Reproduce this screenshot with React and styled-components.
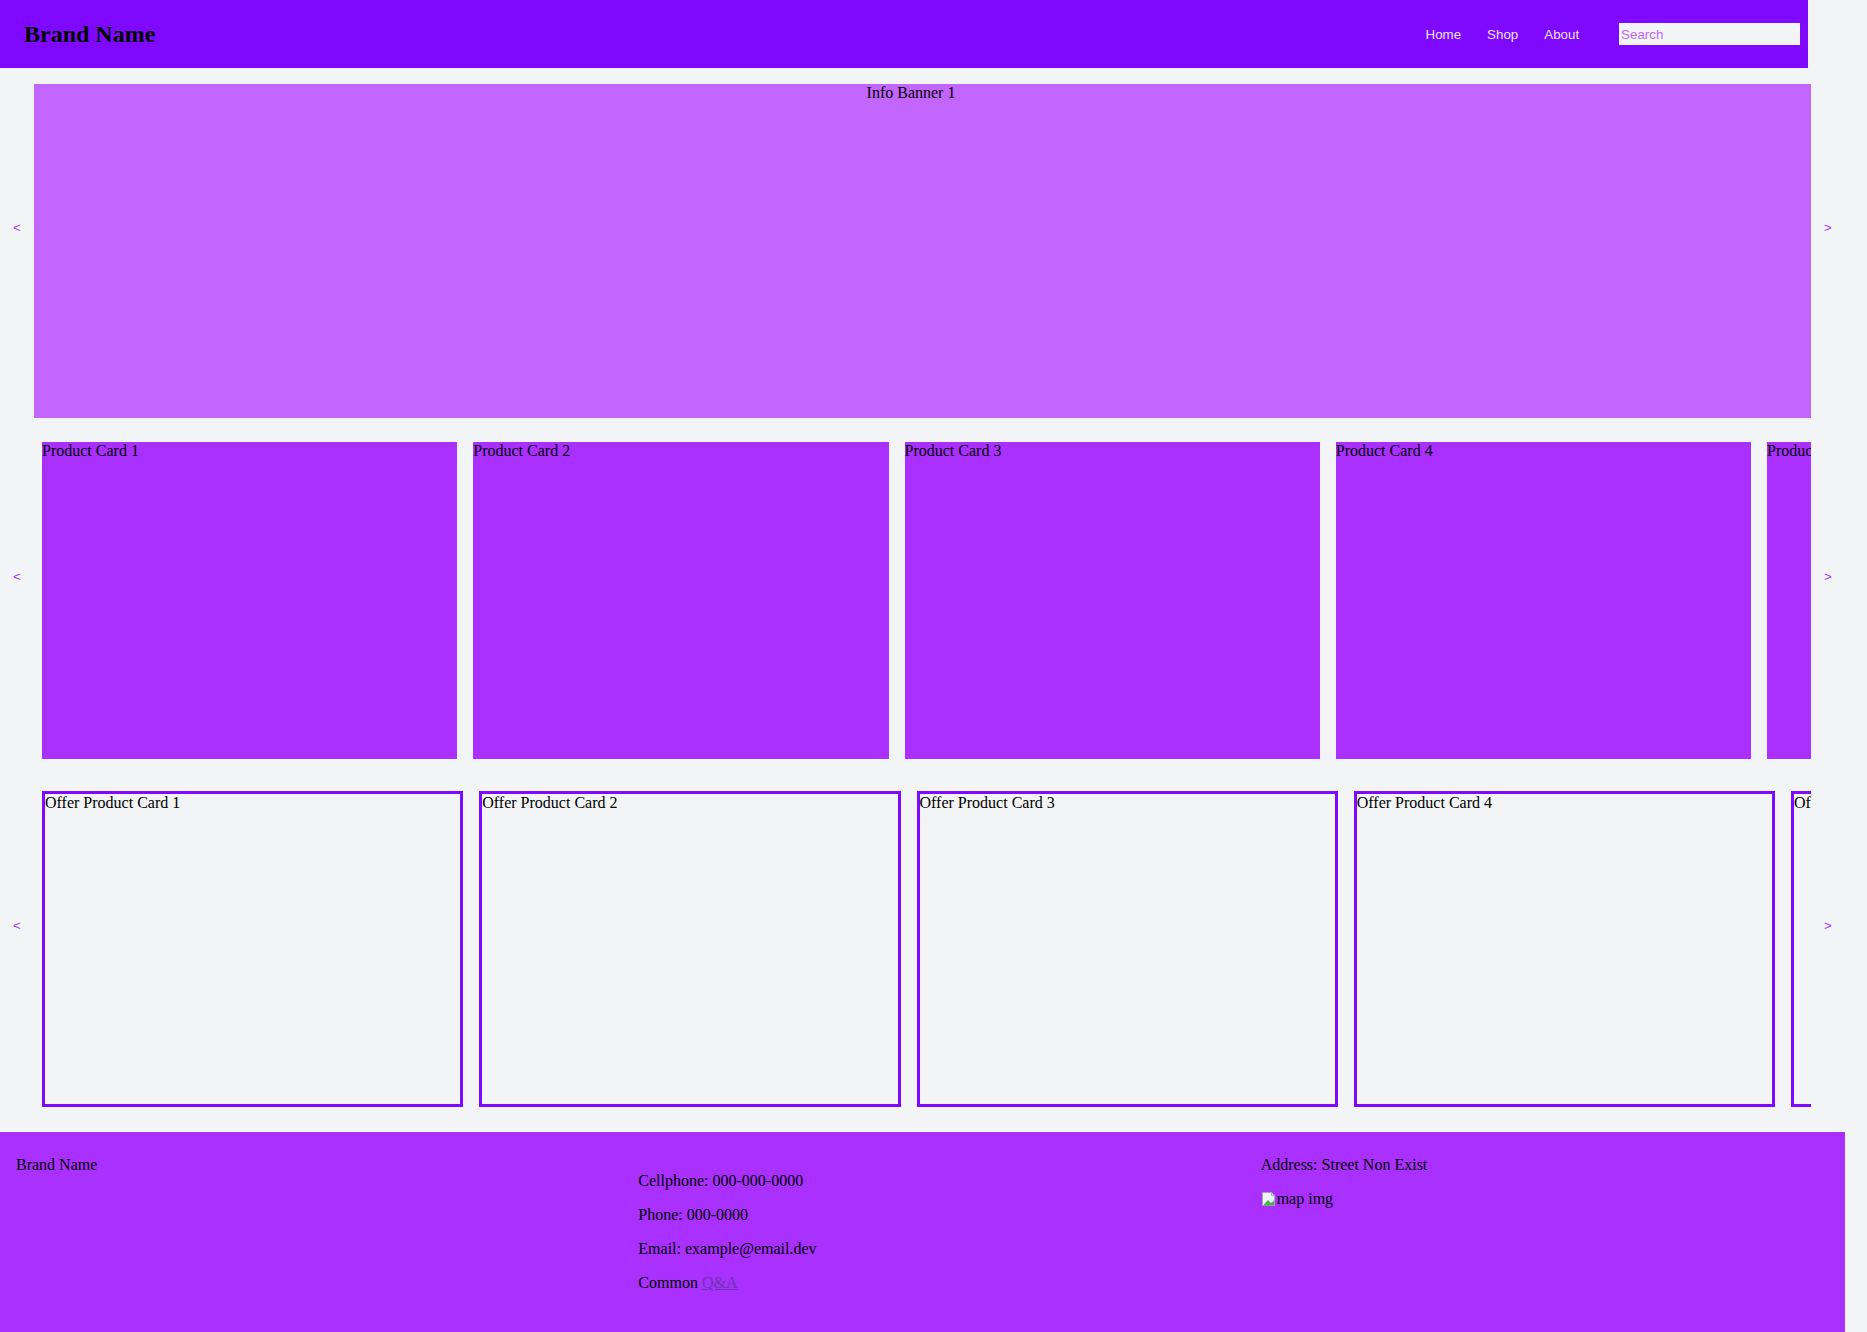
import styled, { createGlobalStyle } from "styled-components"

const GlobalStyle = createGlobalStyle`
    html, body {
        margin: 0;
        padding: 0;
        background-color: #f3f4f6;
    }
    body {
        font-family: "Liberation Serif", "Times New Roman", serif;
        font-size: 16px;
        color: #000;
    }
`

const Page = styled.div`
    width: 1845px;
`

const Header = styled.header`
    width: 98%;
    height: 68px;
    box-sizing: border-box;
    background-color: #7f08ff;
    display: flex;
    align-items: center;
    justify-content: space-between;
    padding: 0 8px 0 24px;
`
const Brand = styled.h1`
    margin: 0;
    font-size: 24px;
    font-weight: bold;
`
const Nav = styled.nav`
    display: flex;
    align-items: center;
`
const NavButton = styled.button`
    background: none;
    border: none;
    padding: 0 13px;
    font-family: "Liberation Sans", Arial, sans-serif;
    font-size: 13.333px;
    color: #ece2ff;
    cursor: pointer;
`
const Search = styled.input`
    margin-left: 27px;
    width: 181px;
    height: 22px;
    box-sizing: border-box;
    border: none;
    outline: none;
    padding: 1px 2px;
    background-color: #f3f4f6;
    font-family: "Liberation Sans", Arial, sans-serif;
    font-size: 13.333px;
    &::placeholder {
        color: #c266ff;
    }
`

const Carousel = styled.section`
    display: flex;
    align-items: center;
    margin-top: ${(p) => p.$top}px;
`
const Arrow = styled.button`
    width: 34px;
    flex-shrink: 0;
    background: none;
    border: none;
    padding: 0;
    margin-bottom: 48px;
    font-family: "Liberation Sans", Arial, sans-serif;
    font-size: 13.333px;
    color: #9d3cff;
    cursor: pointer;
`
const Track = styled.div`
    flex: 1;
    display: flex;
    overflow: hidden;
`
const Banner = styled.div`
    flex: 0 0 100%;
    height: 334px;
    box-sizing: border-box;
    padding-right: 23px;
    background-color: #c266ff;
    text-align: center;
`
const ProductCard = styled.div`
    flex: 0 0 415.25px;
    height: 317px;
    margin: 0 8px;
    background-color: #a930ff;
`
const OfferCard = styled.div`
    flex: 0 0 415.25px;
    height: 310px;
    margin: 0 8px;
    border: 3px solid #7f08ff;
`

const Footer = styled.footer`
    margin-top: 25px;
    width: 1845px;
    height: 200px;
    box-sizing: border-box;
    padding-top: 8px;
    background-color: #a930ff;
    display: flex;
    align-items: flex-start;
`
const FooterCol = styled.div`
    flex: 0 0 622.33px;
    box-sizing: border-box;
    padding: ${(p) => (p.$offset ? "16px" : "0")} 16px 0 16px;
`
const FooterText = styled.p`
    margin: 16px 0;
`
const QaLink = styled.a`
    color: #6a36a8;
    text-decoration: underline;
`
const MapImg = styled.span`
    display: inline-flex;
    align-items: flex-end;
    svg {
        margin-bottom: 1px;
    }
`

const products = [1, 2, 3, 4, 5]

export default function App() {
    return (
        <Page>
            <GlobalStyle />
            <Header>
                <Brand>Brand Name</Brand>
                <Nav>
                    <NavButton>Home</NavButton>
                    <NavButton>Shop</NavButton>
                    <NavButton>About</NavButton>
                    <Search placeholder="Search" />
                </Nav>
            </Header>

            <Carousel $top={16}>
                <Arrow>&lt;</Arrow>
                <Track>
                    <Banner>Info Banner 1</Banner>
                </Track>
                <Arrow>&gt;</Arrow>
            </Carousel>

            <Carousel $top={24}>
                <Arrow>&lt;</Arrow>
                <Track>
                    {products.map((n) => (
                        <ProductCard key={n}>Product Card {n}</ProductCard>
                    ))}
                </Track>
                <Arrow>&gt;</Arrow>
            </Carousel>

            <Carousel $top={32}>
                <Arrow>&lt;</Arrow>
                <Track>
                    {products.map((n) => (
                        <OfferCard key={n}>Offer Product Card {n}</OfferCard>
                    ))}
                </Track>
                <Arrow>&gt;</Arrow>
            </Carousel>

            <Footer>
                <FooterCol>
                    <FooterText>Brand Name</FooterText>
                </FooterCol>
                <FooterCol $offset>
                    <FooterText>Cellphone: 000-000-0000</FooterText>
                    <FooterText>Phone: 000-0000</FooterText>
                    <FooterText>Email: example@email.dev</FooterText>
                    <FooterText>
                        Common <QaLink href="#qa">Q&amp;A</QaLink>
                    </FooterText>
                </FooterCol>
                <FooterCol>
                    <FooterText>Address: Street Non Exist</FooterText>
                    <FooterText>
                        <MapImg>
                            <svg width="16" height="16" viewBox="0 0 16 16">
                                <path d="M1.5 1.5h9l3 3v10h-12z" fill="#eef3fb" stroke="#a0a8b3" />
                                <path d="M10.5 1.5v3h3" fill="none" stroke="#a0a8b3" />
                                <path d="M2 14.5 L7 9 L10 12 L13 9.5 V14.5 Z" fill="#4caf50" />
                            </svg>
                            map img
                        </MapImg>
                    </FooterText>
                </FooterCol>
            </Footer>
        </Page>
    )
}
